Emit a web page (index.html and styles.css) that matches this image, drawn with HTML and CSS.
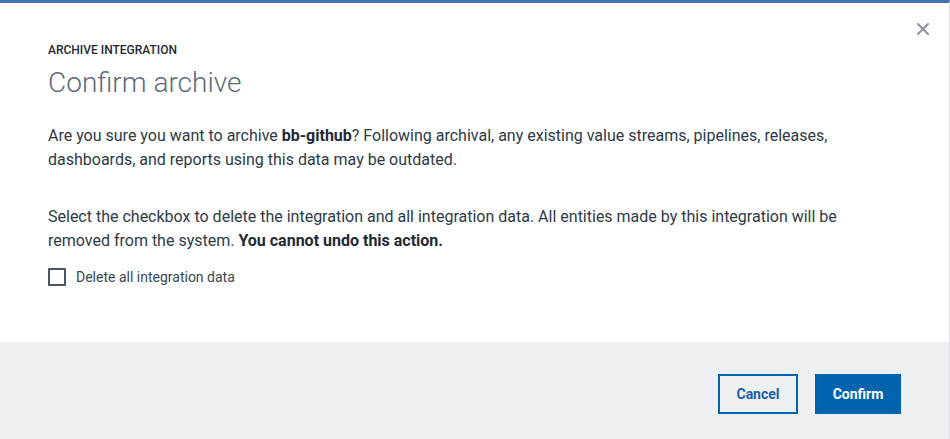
FILE: index.html
```html
<!DOCTYPE html>
<html lang="en">
<head>
<meta charset="utf-8">
<link rel="stylesheet" href="styles.css">
</head>
<body>
<div class="dialog">
  <div class="body">
    <button class="close" aria-label="Close">
      <svg width="12" height="12" viewBox="0 0 12 12"><path d="M1 1L11 11M11 1L1 11" stroke="#8a949f" stroke-width="2" stroke-linecap="square"/></svg>
    </button>
    <div class="eyebrow">ARCHIVE INTEGRATION</div>
    <h1 class="title">Confirm archive</h1>
    <p class="para">Are you sure you want to archive <b>bb-github</b>? Following archival, any existing value streams, pipelines, releases, dashboards, and reports using this data may be outdated.</p>
    <p class="para second">Select the checkbox to delete the integration and all integration data. All entities made by this integration will be removed from the system. <b>You cannot undo this action.</b></p>
    <label class="check"><span class="box"></span><span>Delete all integration data</span></label>
  </div>
  <div class="footer">
    <button class="btn btn-outline">Cancel</button>
    <button class="btn btn-primary">Confirm</button>
  </div>
</div>
</body>
</html>
```
FILE: styles.css
```css
* { box-sizing: border-box; }
html, body { margin: 0; padding: 0; background: #fff; }
body { font-family: Roboto, "Liberation Sans", sans-serif; color: #2e3a47; }
.dialog {
  width: 950px;
  height: 439px;
  border-top: 3px solid #3f73b4;
  border-right: 1px solid #dfe3e8;
  display: flex;
  flex-direction: column;
}
.body {
  position: relative;
  padding: 39px 48px 0 48px;
  height: 339px;
}
.close {
  position: absolute;
  top: 20px;
  right: 20px;
  background: none;
  border: 0;
  padding: 0;
  width: 12px;
  height: 12px;
  display: flex;
}
.eyebrow {
  font-size: 12px;
  font-weight: 500;
  line-height: 16px;
  color: #1f2a36;
}
.title {
  margin: 7px 0 0 0;
  font-size: 28px;
  font-weight: 300;
  line-height: 36px;
  color: #5d6b7a;
}
.para {
  margin: 23px 0 0 0;
  font-size: 16px;
  line-height: 24px;
  color: #2e3a47;
}
.para b { font-weight: 700; color: #1f2a36; }
.second { margin-top: 33px; }
.check {
  margin-top: 14px;
  display: flex;
  align-items: center;
  gap: 10px;
  font-size: 14px;
  color: #3b4754;
  line-height: 20px;
}
.box {
  width: 18px;
  height: 18px;
  border: 2px solid #4a5665;
  border-radius: 1px;
}
.footer {
  flex: 1;
  background: #eef1f4;
  display: flex;
  justify-content: flex-end;
  align-items: flex-start;
  gap: 17px;
  padding: 32px 48px 0 0;
}
.btn {
  height: 40px;
  font-family: Roboto, "Liberation Sans", sans-serif;
  font-size: 14px;
  font-weight: 700;
  padding: 0;
  border-radius: 0;
  cursor: pointer;
}
.btn-outline {
  width: 80px;
  background: transparent;
  border: 2px solid #0063b0;
  color: #1b5fae;
}
.btn-primary {
  width: 86px;
  background: #0063ad;
  border: 0;
  color: #fff;
}
```
